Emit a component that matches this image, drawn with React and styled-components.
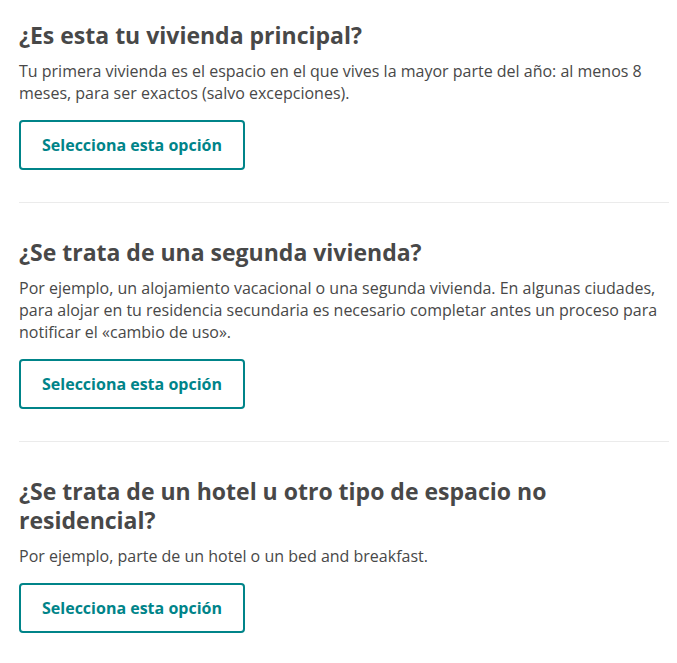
import React from "react";
import styled, { createGlobalStyle } from "styled-components";

const Global = createGlobalStyle`
  html, body { margin: 0; padding: 0; background: #fff; }
  body { font-family: "Open Sans", "Liberation Sans", sans-serif; color: #484848; }
`;

const Page = styled.div`
  padding: 0 8px 0 19px;
`;

const Section = styled.section`
  padding: ${(p) => (p.$first ? "21px" : "35px")} 0 32px;
  border-bottom: ${(p) => (p.$last ? "none" : "1px solid #ebebeb")};
`;

const Title = styled.h2`
  margin: 0;
  font-size: 23px;
  line-height: 29px;
  font-weight: 700;
  color: #484848;
`;

const Text = styled.p`
  margin: 10px 0 0;
  font-size: 16px;
  line-height: 22px;
  font-weight: 400;
  color: #484848;
`;

const Button = styled.button`
  display: block;
  margin-top: 16px;
  box-sizing: border-box;
  height: 50px;
  width: 226px;
  border: 2px solid #008489;
  border-radius: 4px;
  background: #fff;
  color: #008489;
  font-family: inherit;
  font-size: 16px;
  font-weight: 700;
  cursor: pointer;
`;

const items = [
  {
    title: "¿Es esta tu vivienda principal?",
    text: "Tu primera vivienda es el espacio en el que vives la mayor parte del año: al menos 8 meses, para ser exactos (salvo excepciones).",
  },
  {
    title: "¿Se trata de una segunda vivienda?",
    text: "Por ejemplo, un alojamiento vacacional o una segunda vivienda. En algunas ciudades, para alojar en tu residencia secundaria es necesario completar antes un proceso para notificar el «cambio de uso».",
  },
  {
    title: "¿Se trata de un hotel u otro tipo de espacio no residencial?",
    text: "Por ejemplo, parte de un hotel o un bed and breakfast.",
  },
];

export default function App() {
  return (
    <>
      <Global />
      <Page>
        {items.map((it, i) => (
          <Section key={i} $first={i === 0} $last={i === items.length - 1}>
            <Title>{it.title}</Title>
            <Text>{it.text}</Text>
            <Button>Selecciona esta opción</Button>
          </Section>
        ))}
      </Page>
    </>
  );
}
